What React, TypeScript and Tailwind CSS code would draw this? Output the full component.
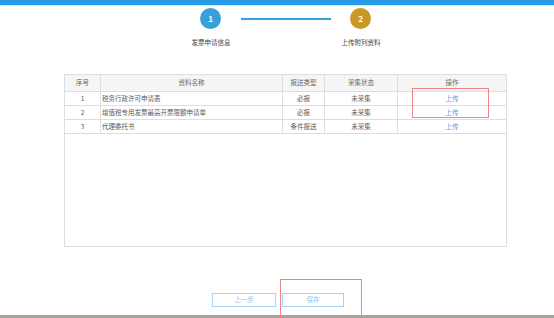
import React from "react";

const rows = [
  { no: "1", name: "税务行政许可申请表", type: "必报", state: "未采集" },
  { no: "2", name: "增值税专用发票最高开票限额申请单", type: "必报", state: "未采集" },
  { no: "3", name: "代理委托书", type: "条件报送", state: "未采集" },
];

const cols = "grid grid-cols-[36px_182px_42px_73px_108px]";

export default function App() {
  return (
    <div
      className="relative w-[554px] h-[318px] overflow-hidden bg-white flex flex-col text-[6.5px] text-[#5a5a5a]"
      style={{ fontFamily: '"Noto Sans CJK SC", "Noto Sans", sans-serif' }}
    >
      <div className="h-[5px] bg-[#279be8] shrink-0" />
      <div className="h-px bg-[#cfe7f8] shrink-0" />

      {/* steps */}
      <div className="flex items-center mt-[2px] pl-[200px]">
        <div className="w-[21px] h-[21px] rounded-full bg-[#389fdd] text-white font-bold text-[8px] flex items-center justify-center">
          1
        </div>
        <div className="ml-[20px] w-[90px] h-[2px] bg-[#3a9fe0] shadow-[0_0_1px_#8cc8f0]" />
        <div className="ml-[19px] w-[21px] h-[21px] rounded-full bg-[#c99826] text-white font-bold text-[8px] flex items-center justify-center">
          2
        </div>
      </div>
      <div className="flex mt-[9px] pl-[171px] text-[#444] leading-[9px]">
        <div className="w-[80px] text-center">发票申请信息</div>
        <div className="ml-[70px] w-[80px] text-center">上传附列资料</div>
      </div>

      {/* table */}
      <div className="ml-[64px] mt-[27px] w-[443px] h-[173px] border border-[#dedede]">
        <div className={`${cols} h-[17px] bg-[#f5f5f5] border-b border-[#dedede] text-[#666]`}>
          <div className="border-r border-[#dedede] flex items-center justify-center">序号</div>
          <div className="border-r border-[#dedede] flex items-center justify-center">资料名称</div>
          <div className="border-r border-[#dedede] flex items-center justify-center">报送类型</div>
          <div className="border-r border-[#dedede] flex items-center justify-center">采集状态</div>
          <div className="flex items-center justify-center">操作</div>
        </div>
        {rows.map((r) => (
          <div key={r.no} className={`${cols} h-[14px] border-b border-[#dedede]`}>
            <div className="border-r border-[#dedede] flex items-center justify-center">{r.no}</div>
            <div className="border-r border-[#dedede] flex items-center pl-[1px]">{r.name}</div>
            <div className="border-r border-[#dedede] flex items-center justify-center">{r.type}</div>
            <div className="border-r border-[#dedede] flex items-center justify-center">{r.state}</div>
            <div className="flex items-center justify-center text-[#45a6ef]">上传</div>
          </div>
        ))}
      </div>

      {/* buttons */}
      <div className="flex mt-[46px] pl-[212px] gap-[6px]">
        <button className="w-[64px] h-[14px] border border-[#a9d3f5] text-[#8ec4ef] text-[6.5px] flex items-center justify-center">
          上一步
        </button>
        <button className="w-[62px] h-[14px] border border-[#a9d3f5] text-[#8ec4ef] text-[6.5px] flex items-center justify-center">
          保存
        </button>
      </div>

      <div className="mt-auto h-[3px] bg-[#a8a49d] shrink-0" />

      {/* annotation boxes */}
      <div className="absolute left-[412px] top-[88px] w-[77px] h-[30px] border border-[#f08585]" />
      <div className="absolute left-[280px] top-[279px] w-[82px] h-[50px] border border-[#f08585]" />
    </div>
  );
}
